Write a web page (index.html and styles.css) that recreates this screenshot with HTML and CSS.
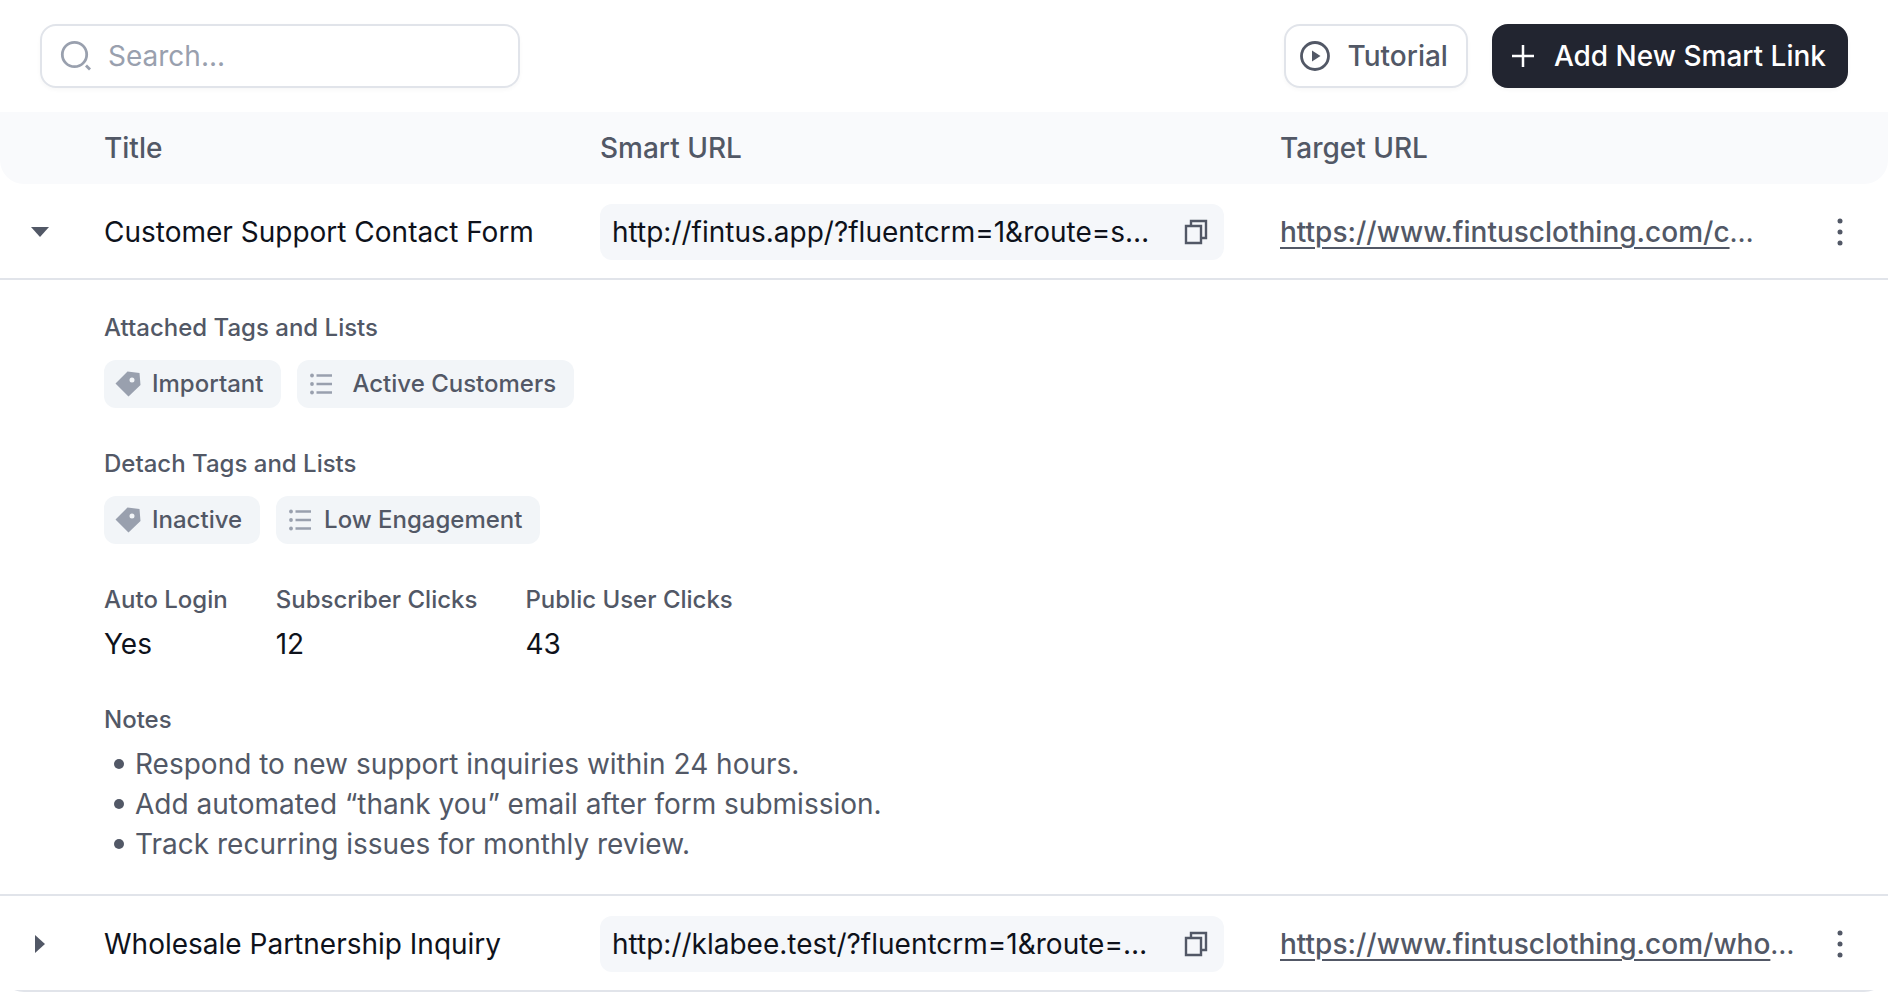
FILE: index.html
```
<!DOCTYPE html>
<html lang="en">
<head>
    <meta charset="UTF-8">
    <meta name="viewport" content="width=device-width, initial-scale=1.0">
    <title>Smart Links</title>
    <link rel="stylesheet" href="styles.css">
</head>
<body>
    <!-- Shared icons -->
    <svg class="sprite" aria-hidden="true">
        <symbol id="icon-copy" viewBox="0 0 24 26">
            <path d="M7 6V2H22V19H18M2 7H17V24H2Z" fill="none" stroke="currentColor" stroke-width="2.4"/>
        </symbol>
        <symbol id="icon-dots" viewBox="0 0 6 28">
            <circle cx="3" cy="3" r="2.5" fill="currentColor"/>
            <circle cx="3" cy="14" r="2.5" fill="currentColor"/>
            <circle cx="3" cy="25" r="2.5" fill="currentColor"/>
        </symbol>
        <symbol id="icon-tag" viewBox="0 0 26 26">
            <path fill-rule="evenodd" d="M12.5 0.5L24.5 2L25.5 14L13.5 25.5L0.5 12.5ZM17 6.5A2.5 2.5 0 1 0 17 11.5A2.5 2.5 0 1 0 17 6.5Z" fill="currentColor"/>
        </symbol>
        <symbol id="icon-list" viewBox="0 0 22 22">
            <path d="M6.5 2.5H22M6.5 11H22M6.5 19.5H22" stroke="currentColor" stroke-width="2.5" fill="none"/>
            <circle cx="2" cy="2.5" r="1.9" fill="currentColor"/>
            <circle cx="2" cy="11" r="1.9" fill="currentColor"/>
            <circle cx="2" cy="19.5" r="1.9" fill="currentColor"/>
        </symbol>
    </svg>

    <header class="toolbar">
        <label class="search">
            <svg class="search-icon" viewBox="0 0 32 32" aria-hidden="true">
                <circle cx="14.5" cy="14.5" r="12.2" fill="none" stroke="currentColor" stroke-width="2.8"/>
                <path d="M26 25.5L30 29.5" stroke="currentColor" stroke-width="2.8"/>
            </svg>
            <input type="search" class="search-input" placeholder="Search..." aria-label="Search">
        </label>
        <div class="actions">
            <button type="button" class="btn">
                <svg class="btn-icon" viewBox="0 0 30 30" aria-hidden="true">
                    <circle cx="15" cy="15" r="13.5" fill="none" stroke="currentColor" stroke-width="2.8"/>
                    <path d="M12 9.5L20.5 15L12 20.5Z" fill="currentColor"/>
                </svg>
                Tutorial
            </button>
            <button type="button" class="btn btn-dark">
                <svg class="plus-icon" viewBox="0 0 22 22" aria-hidden="true">
                    <path d="M11 0V22M0 11H22" stroke="currentColor" stroke-width="2.5"/>
                </svg>
                Add New Smart Link
            </button>
        </div>
    </header>

    <main class="panel">
        <table class="links">
            <colgroup>
                <col class="col-toggle">
                <col class="col-title">
                <col class="col-smart">
                <col>
                <col class="col-menu">
            </colgroup>
            <thead>
                <tr>
                    <th></th>
                    <th>Title</th>
                    <th>Smart URL</th>
                    <th>Target URL</th>
                    <th></th>
                </tr>
            </thead>
            <tbody>
                <tr>
                    <td>
                        <button type="button" class="icon-btn toggle" aria-label="Collapse" aria-expanded="true">
                            <svg width="18" height="10" viewBox="0 0 18 10"><path d="M0 0H18L9 10Z" fill="currentColor"/></svg>
                        </button>
                    </td>
                    <td>Customer Support Contact Form</td>
                    <td class="smart-cell">
                        <div class="url-box">
                            <span>http://fintus.app/?fluentcrm=1&amp;route=s…</span>
                            <button type="button" class="icon-btn" aria-label="Copy"><svg width="24" height="26"><use href="#icon-copy"/></svg></button>
                        </div>
                    </td>
                    <td class="target"><a href="#">https://www.fintusclothing.com/c</a>…</td>
                    <td class="menu-cell">
                        <button type="button" class="icon-btn" aria-label="More"><svg width="6" height="28"><use href="#icon-dots"/></svg></button>
                    </td>
                </tr>
                <tr>
                    <td></td>
                    <td colspan="4" class="details">
                        <section>
                            <h3>Attached Tags and Lists</h3>
                            <div class="chips">
                                <span class="chip"><svg class="tag-icon"><use href="#icon-tag"/></svg>Important</span>
                                <span class="chip chip-list chip-wide"><svg class="list-icon"><use href="#icon-list"/></svg>Active Customers</span>
                            </div>
                        </section>
                        <section>
                            <h3>Detach Tags and Lists</h3>
                            <div class="chips">
                                <span class="chip"><svg class="tag-icon"><use href="#icon-tag"/></svg>Inactive</span>
                                <span class="chip chip-list"><svg class="list-icon"><use href="#icon-list"/></svg>Low Engagement</span>
                            </div>
                        </section>
                        <dl class="stats">
                            <div>
                                <dt>Auto Login</dt>
                                <dd>Yes</dd>
                            </div>
                            <div>
                                <dt>Subscriber Clicks</dt>
                                <dd>12</dd>
                            </div>
                            <div>
                                <dt>Public User Clicks</dt>
                                <dd>43</dd>
                            </div>
                        </dl>
                        <section class="notes">
                            <h3>Notes</h3>
                            <ul>
                                <li>Respond to new support inquiries within 24 hours.</li>
                                <li>Add automated “thank you” email after form submission.</li>
                                <li>Track recurring issues for monthly review.</li>
                            </ul>
                        </section>
                    </td>
                </tr>
                <tr>
                    <td>
                        <button type="button" class="icon-btn toggle" aria-label="Expand" aria-expanded="false">
                            <svg width="10" height="18" viewBox="0 0 10 18"><path d="M0 0V18L10 9Z" fill="currentColor"/></svg>
                        </button>
                    </td>
                    <td>Wholesale Partnership Inquiry</td>
                    <td class="smart-cell">
                        <div class="url-box">
                            <span>http://klabee.test/?fluentcrm=1&amp;route=…</span>
                            <button type="button" class="icon-btn" aria-label="Copy"><svg width="24" height="26"><use href="#icon-copy"/></svg></button>
                        </div>
                    </td>
                    <td class="target"><a href="#">https://www.fintusclothing.com/who</a>…</td>
                    <td class="menu-cell">
                        <button type="button" class="icon-btn" aria-label="More"><svg width="6" height="28"><use href="#icon-dots"/></svg></button>
                    </td>
                </tr>
            </tbody>
        </table>
    </main>
</body>
</html>
```
FILE: styles.css
```
* {
    box-sizing: border-box;
}
body {
    margin: 0;
    background-color: #fff;
    color: #0e121b;
    font-family: Inter, "Liberation Sans", sans-serif;
    font-size: 28px;
    line-height: 40px;
}
svg {
    display: block;
    flex-shrink: 0;
}
.sprite {
    position: absolute;
    width: 0;
    height: 0;
}

/* Toolbar */
.toolbar {
    display: flex;
    justify-content: space-between;
    padding: 24px 40px;
}
.search {
    display: flex;
    align-items: center;
    gap: 16px;
    width: 480px;
    height: 64px;
    padding: 0 18px;
    border: 2px solid #e1e4ea;
    border-radius: 16px;
    box-shadow: 0 2px 4px rgba(10, 13, 20, 0.03);
}
.search-icon {
    width: 32px;
    height: 32px;
    color: #99a0ae;
}
.search-input {
    flex: 1;
    min-width: 0;
    padding: 0;
    border: none;
    outline: none;
    background: none;
    font: inherit;
}
.search-input::placeholder {
    color: #99a0ae;
}
.actions {
    display: flex;
    gap: 24px;
}
.btn {
    display: flex;
    align-items: center;
    gap: 17px;
    height: 64px;
    padding: 0 18px 0 14px;
    border: 2px solid #e1e4ea;
    border-radius: 16px;
    background-color: #fff;
    box-shadow: 0 2px 4px rgba(10, 13, 20, 0.03);
    color: #525866;
    font: inherit;
    font-weight: 500;
    cursor: pointer;
}
.btn-dark {
    gap: 20px;
    padding: 0 20px 0 18px;
    border-color: #222530;
    background-color: #222530;
    color: #fff;
}
.btn-icon {
    width: 30px;
    height: 30px;
}
.plus-icon {
    width: 22px;
    height: 22px;
}
.icon-btn {
    display: flex;
    padding: 0;
    border: none;
    background: none;
    color: #525866;
    cursor: pointer;
}

/* Table */
.panel {
    overflow: hidden;
    border-radius: 0 0 24px 24px;
}
.links {
    width: 100%;
    border-collapse: separate;
    border-spacing: 0;
    table-layout: fixed;
}
.col-toggle {
    width: 104px;
}
.col-title {
    width: 496px;
}
.col-smart {
    width: 680px;
}
.col-menu {
    width: 96px;
}
th {
    height: 72px;
    padding: 0;
    background-color: #f9fafc;
    color: #525866;
    font-weight: 500;
    text-align: left;
}
th:first-child {
    border-bottom-left-radius: 24px;
}
th:last-child {
    border-bottom-right-radius: 24px;
}
td {
    height: 96px;
    padding: 2px 0 0;
    border-bottom: 2px solid #e1e4ea;
    white-space: nowrap;
}
.toggle {
    justify-content: center;
    width: 80px;
}
td.smart-cell {
    padding-right: 56px;
}
.url-box {
    display: flex;
    align-items: center;
    justify-content: space-between;
    height: 56px;
    padding: 0 16px 0 12px;
    border-radius: 12px;
    background-color: #f5f7fa;
}
.target,
.target a {
    color: #525866;
}
.target a {
    font-weight: 500;
    text-underline-offset: 5px;
    text-decoration-thickness: 2px;
}
.menu-cell .icon-btn {
    margin-left: 45px;
}

/* Expanded row */
td.details {
    padding: 32px 0 30px;
}
.details section,
.stats {
    margin-bottom: 40px;
}
.details .notes {
    margin-bottom: 0;
}
h3,
dt {
    margin: 0;
    color: #525866;
    font-size: 24px;
    font-weight: 500;
    line-height: 32px;
}
.chips {
    display: flex;
    gap: 16px;
    margin-top: 16px;
}
.chip {
    display: flex;
    align-items: center;
    gap: 11px;
    height: 48px;
    padding: 0 18px 0 11px;
    border-radius: 12px;
    background-color: #f2f5f8;
    color: #525866;
    font-size: 24px;
    font-weight: 500;
}
.chip-list {
    gap: 13px;
    padding-left: 13px;
}
.chip-wide {
    gap: 20px;
}
.tag-icon,
.list-icon {
    color: #99a0ae;
}
.tag-icon {
    width: 26px;
    height: 26px;
}
.list-icon {
    width: 22px;
    height: 22px;
}
.stats {
    display: flex;
    gap: 48px;
    margin-top: 0;
}
dd {
    margin: 8px 0 0;
}
ul {
    margin: 8px 0 0;
    padding: 0 0 0 10px;
    color: #525866;
    list-style: none;
}
li {
    display: flex;
    align-items: center;
    gap: 11px;
}
li::before {
    content: "";
    width: 10px;
    height: 10px;
    border-radius: 50%;
    background-color: #525866;
}
```
